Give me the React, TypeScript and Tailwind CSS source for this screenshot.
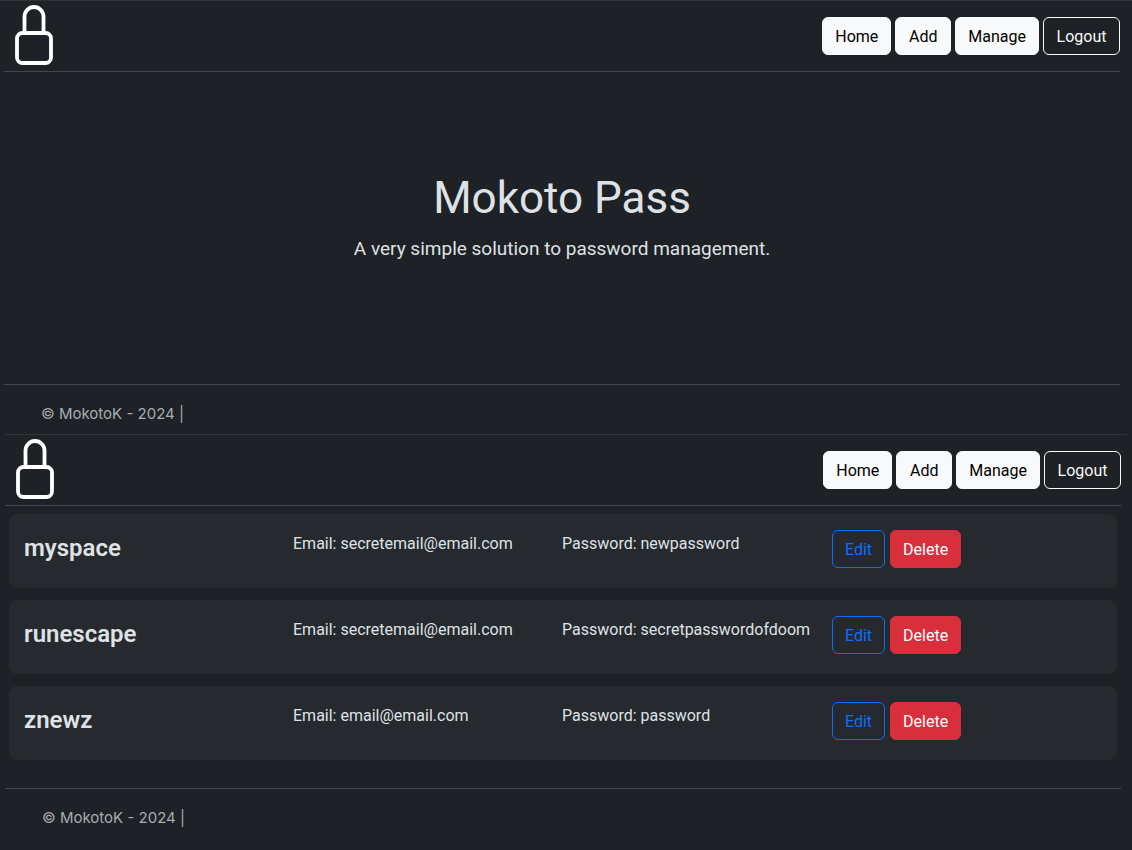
const btn = "inline-flex h-[38px] items-center justify-center rounded-md border px-3 pt-px text-base";

function Lock() {
  return (
    <svg width="38" height="60" viewBox="0 0 38 60" fill="none" stroke="#fff" strokeWidth="3.8" aria-hidden="true">
      <rect x="2" y="28" width="34" height="30" rx="5.5" />
      <path d="M9.5 28V11.5a9.5 9.5 0 0 1 19 0V28" />
    </svg>
  );
}

function Header() {
  return (
    <header className="flex h-[71px] items-start justify-between border-b border-[#43474b] pl-[11px]">
      <a href="#home" aria-label="Mokoto Pass" className="pt-1">
        <Lock />
      </a>
      <nav className="flex gap-1 pt-4">
        {["Home", "Add", "Manage"].map((label) => (
          <button key={label} className={`${btn} min-w-14 border-[#f8f9fa] bg-[#f8f9fa] text-black`}>
            {label}
          </button>
        ))}
        <button className={`${btn} min-w-[77px] border-[#f8f9fa] text-[#f8f9fa]`}>Logout</button>
      </nav>
    </header>
  );
}

function Footer() {
  return (
    <footer className="border-t border-[#43474b] pt-4 pl-[37px] font-[Inter,sans-serif] text-[15px] leading-[26px] text-[#a7acb1]">
      © MokotoK - 2024 |
    </footer>
  );
}

const entries = [
  { name: "myspace", email: "secretemail@email.com", password: "newpassword" },
  { name: "runescape", email: "secretemail@email.com", password: "secretpasswordofdoom" },
  { name: "znewz", email: "email@email.com", password: "password" },
];

export default function App() {
  return (
    <div className="min-h-screen bg-[#1e2125] font-[Roboto,sans-serif] text-[#dee2e6]">
      <section className="border-t border-[#303337] pr-3 pl-1">
        <Header />
        <main className="pt-[97px] pb-[120px] text-center">
          <h1 className="text-[44px] leading-[58px] font-normal">Mokoto Pass</h1>
          <p className="mt-[7px] text-[19px] leading-[30px]">A very simple solution to password management.</p>
        </main>
        <Footer />
      </section>
      <section className="mt-[7px] mr-[5px] ml-[5px] border-t border-[#303337] pr-[6px]">
        <Header />
        <main className="flex flex-col gap-3 pt-2 pr-1 pb-7 pl-1">
          {entries.map((e) => (
            <article key={e.name} className="grid h-[74px] grid-cols-[269px_269px_270px_1fr] rounded-lg bg-[#26292d] px-[15px] pt-4">
              <h2 className="text-2xl leading-9 font-semibold">{e.name}</h2>
              <p className="leading-7">Email: {e.email}</p>
              <p className="leading-7">Password: {e.password}</p>
              <div className="flex items-start gap-[5px]">
                <button className={`${btn} border-[#0d6efd] text-[#0d6efd]`}>Edit</button>
                <button className={`${btn} border-[#d92f3c] bg-[#d92f3c] text-white`}>Delete</button>
              </div>
            </article>
          ))}
        </main>
        <Footer />
      </section>
    </div>
  );
}
